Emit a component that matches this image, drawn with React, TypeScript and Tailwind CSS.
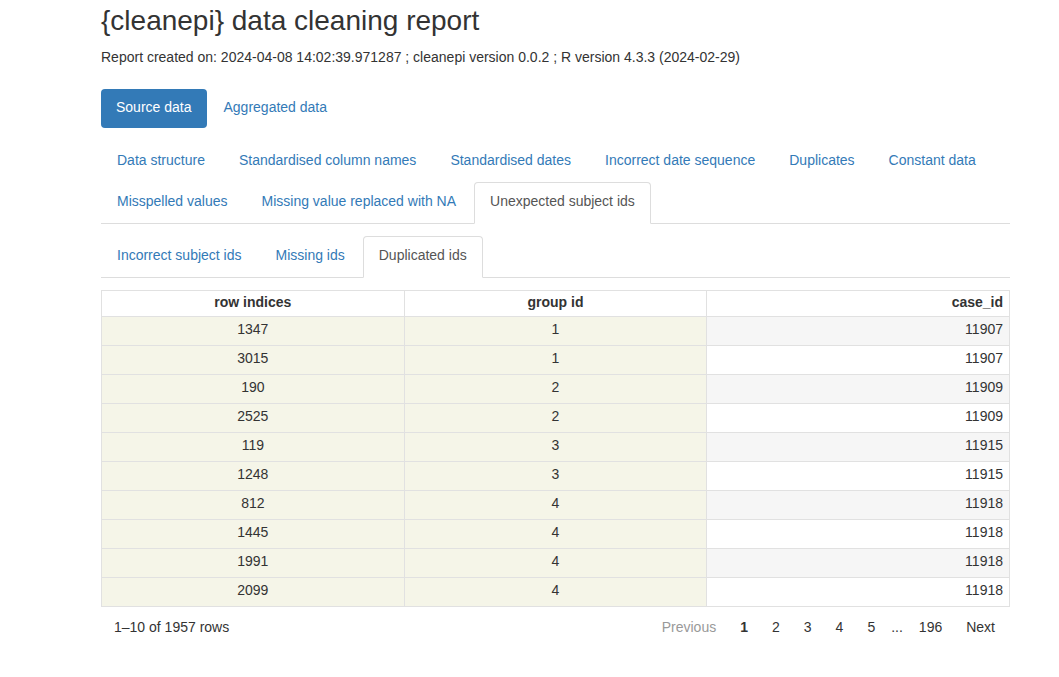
import React from 'react';

const topTabs = [
  ['Data structure', 'Standardised column names', 'Standardised dates', 'Incorrect date sequence', 'Duplicates', 'Constant data'],
  ['Misspelled values', 'Missing value replaced with NA', 'Unexpected subject ids'],
];

const subTabs = ['Incorrect subject ids', 'Missing ids', 'Duplicated ids'];

const rows = [
  [1347, 1, 11907],
  [3015, 1, 11907],
  [190, 2, 11909],
  [2525, 2, 11909],
  [119, 3, 11915],
  [1248, 3, 11915],
  [812, 4, 11918],
  [1445, 4, 11918],
  [1991, 4, 11918],
  [2099, 4, 11918],
];

function Tab({ label, active }: { label: string; active?: boolean }) {
  return (
    <li className="-mb-px mr-[2px]">
      <a
        className={
          active
            ? 'block px-[15px] pt-[8px] pb-[12px] leading-[20px] rounded-t-[4px] border border-[#ddd] border-b-transparent bg-white text-[#555]'
            : 'block px-[15px] pt-[8px] pb-[12px] leading-[20px] rounded-t-[4px] border border-transparent text-[#337ab7]'
        }
      >
        {label}
      </a>
    </li>
  );
}

export default function App() {
  return (
    <div className="min-h-screen bg-white text-[#333] text-[14px]" style={{ fontFamily: '"Liberation Sans", Arial, sans-serif' }}>
      <div className="ml-[101px] w-[909px]">
        <h1 className="h-[40px] leading-[40px] pt-px text-[28px] font-normal">{'{cleanepi} data cleaning report'}</h1>
        <p className="mt-[7px] leading-[20px]">
          Report created on: 2024-04-08 14:02:39.971287 ; cleanepi version 0.0.2 ; R version 4.3.3 (2024-02-29)
        </p>

        <ul className="mt-[22px] flex gap-[2px]">
          <li>
            <a className="block px-[15px] pt-[8px] pb-[11px] leading-[20px] rounded-[4px] bg-[#337ab7] text-white">Source data</a>
          </li>
          <li>
            <a className="block px-[15px] pt-[8px] pb-[11px] leading-[20px] text-[#337ab7]">Aggregated data</a>
          </li>
        </ul>

        <ul className="mt-[13px] flex flex-wrap border-b border-[#ddd]">
          {topTabs[0].map((t) => (
            <Tab key={t} label={t} />
          ))}
          <li className="w-full h-0" />
          {topTabs[1].map((t) => (
            <Tab key={t} label={t} active={t === 'Unexpected subject ids'} />
          ))}
        </ul>

        <ul className="mt-[12px] flex border-b border-[#ddd]">
          {subTabs.map((t) => (
            <Tab key={t} label={t} active={t === 'Duplicated ids'} />
          ))}
        </ul>

        <table className="mt-[12px] w-full table-fixed border-collapse border border-[#e1e1e1]">
          <thead>
            <tr className="h-[26px]">
              <th className="border border-[#e1e1e1] px-2 pb-[2px] text-center font-bold">row indices</th>
              <th className="border border-[#e1e1e1] px-2 pb-[2px] text-center font-bold">group id</th>
              <th className="border border-[#e1e1e1] px-[6px] pb-[2px] text-right font-bold">case_id</th>
            </tr>
          </thead>
          <tbody>
            {rows.map((r, i) => (
              <tr key={i} className="h-[29px]">
                <td className="border border-[#e1e1e1] bg-[#f5f5e8] pb-[3px] text-center">{r[0]}</td>
                <td className="border border-[#e1e1e1] bg-[#f5f5e8] pb-[3px] text-center">{r[1]}</td>
                <td className={'border border-[#e1e1e1] px-[6px] pb-[3px] text-right ' + (i % 2 === 0 ? 'bg-[#f6f6f6]' : 'bg-white')}>
                  {r[2]}
                </td>
              </tr>
            ))}
          </tbody>
        </table>

        <div className="mt-[9px] flex h-[22px] items-center justify-between">
          <span className="pl-[13px]">1–10 of 1957 rows</span>
          <div className="flex items-center pr-[3px]">
            <span className="px-3 text-[#999]">Previous</span>
            <span className="px-3 font-bold">1</span>
            <span className="px-3">2</span>
            <span className="px-3">3</span>
            <span className="px-3">4</span>
            <span className="px-3">5</span>
            <span className="px-1">...</span>
            <span className="px-3">196</span>
            <span className="px-3">Next</span>
          </div>
        </div>
      </div>
    </div>
  );
}
